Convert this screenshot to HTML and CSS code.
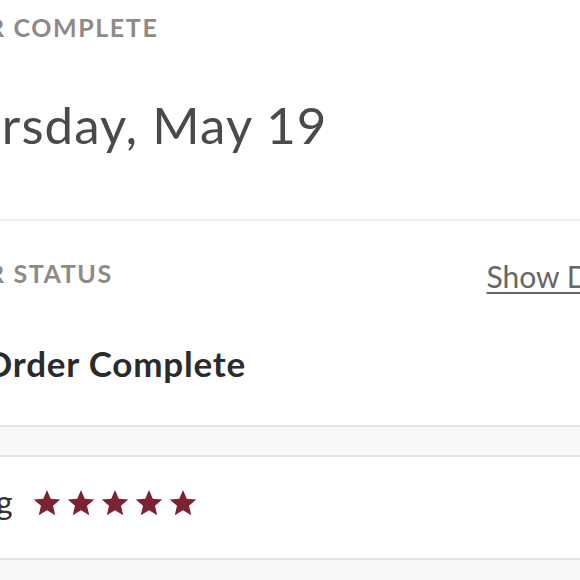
FILE: index.html
```html
<!DOCTYPE html>
<html lang="en">
<head>
<meta charset="utf-8">
<title>Order</title>
<link rel="stylesheet" href="styles.css">
</head>
<body>
<div class="page">
  <section class="summary">
    <div class="label">Order Complete</div>
    <div class="date">Thursday, May 19</div>
  </section>
  <section class="status">
    <div class="status-head">
      <div class="label">Order Status</div>
      <a class="details-link" href="#">Show Details</a>
    </div>
    <div class="status-value">
      <svg class="status-icon" viewBox="0 0 44 44" width="44" height="44" aria-hidden="true"><circle cx="22" cy="22" r="20" fill="#5a9e4b"/><path d="M12 22 l7 7 l13 -14" fill="none" stroke="#fff" stroke-width="4" stroke-linecap="round" stroke-linejoin="round"/></svg>
      <span>Order Complete</span>
    </div>
  </section>
  <div class="spacer"></div>
  <section class="rating">
    <span class="rating-label">Rating</span>
    <div class="stars">
      <svg class="star" viewBox="0 0 24 24"><polygon points="12,1.5 15,8.5 22.6,9.2 16.8,14.2 18.6,21.7 12,17.7 5.4,21.7 7.2,14.2 1.4,9.2 9,8.5"/></svg>
      <svg class="star" viewBox="0 0 24 24"><polygon points="12,1.5 15,8.5 22.6,9.2 16.8,14.2 18.6,21.7 12,17.7 5.4,21.7 7.2,14.2 1.4,9.2 9,8.5"/></svg>
      <svg class="star" viewBox="0 0 24 24"><polygon points="12,1.5 15,8.5 22.6,9.2 16.8,14.2 18.6,21.7 12,17.7 5.4,21.7 7.2,14.2 1.4,9.2 9,8.5"/></svg>
      <svg class="star" viewBox="0 0 24 24"><polygon points="12,1.5 15,8.5 22.6,9.2 16.8,14.2 18.6,21.7 12,17.7 5.4,21.7 7.2,14.2 1.4,9.2 9,8.5"/></svg>
      <svg class="star" viewBox="0 0 24 24"><polygon points="12,1.5 15,8.5 22.6,9.2 16.8,14.2 18.6,21.7 12,17.7 5.4,21.7 7.2,14.2 1.4,9.2 9,8.5"/></svg>
    </div>
  </section>
  <div class="spacer spacer-bottom"></div>
</div>
</body>
</html>
```
FILE: styles.css
```css
html, body {
  margin: 0;
  padding: 0;
  background: #ffffff;
  overflow: hidden;
}

body {
  font-family: Lato, "Liberation Sans", sans-serif;
  width: 580px;
  height: 580px;
}

.page {
  width: 794px;
  margin-left: -112px;
}

.summary {
  padding: 12px 24px 0;
  height: 207px;
  border-bottom: 2px solid #efeee9;
}

.label {
  font-size: 25px;
  line-height: 30px;
  font-weight: 700;
  letter-spacing: 1.6px;
  text-transform: uppercase;
  color: #8e8a85;
}

.date {
  margin-top: 52px;
  font-size: 51px;
  line-height: 61px;
  font-weight: 400;
  letter-spacing: 1.1px;
  color: #4a4a4a;
}

.status {
  padding: 37px 24px 0;
  height: 167px;
}

.status-head {
  display: flex;
  justify-content: space-between;
  align-items: flex-start;
}

.details-link {
  font-size: 30px;
  line-height: 36px;
  color: #666666;
  text-decoration: underline;
  text-decoration-thickness: 2px;
  text-underline-offset: 4px;
}

.status-value {
  display: flex;
  align-items: center;
  gap: 28px;
  margin-top: 47px;
  font-size: 35px;
  line-height: 42px;
  font-weight: 700;
  letter-spacing: 0.8px;
  color: #2b2b2b;
}

.status-icon {
  flex: none;
}

.spacer {
  height: 28px;
  background: #f8f8f8;
  border-top: 2px solid #e4e4e4;
  border-bottom: 2px solid #e4e4e4;
}

.spacer-bottom {
  height: 40px;
  border-bottom: none;
}

.rating {
  display: flex;
  align-items: flex-start;
  gap: 19px;
  height: 75px;
  padding: 26px 24px 0 35px;
}

.rating-label {
  font-size: 32px;
  line-height: 38px;
  color: #333333;
}

.stars {
  display: flex;
  gap: 4px;
  margin-top: 5px;
}

.star {
  width: 30px;
  height: 30px;
  fill: #7c2233;
}
```
